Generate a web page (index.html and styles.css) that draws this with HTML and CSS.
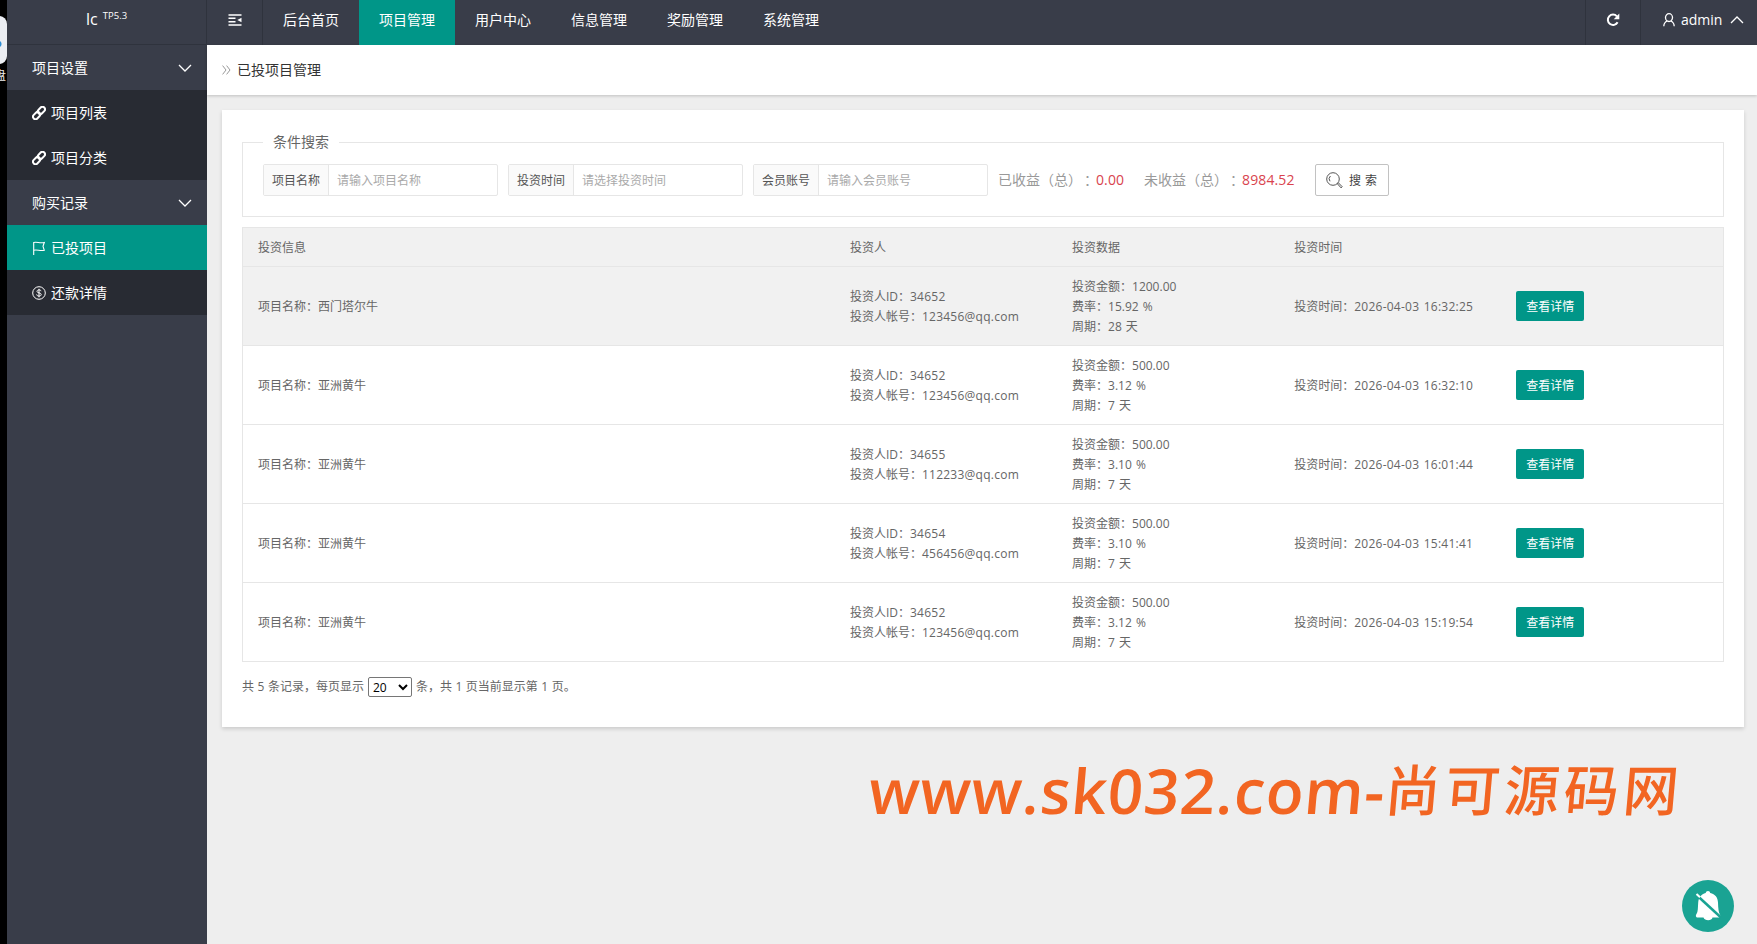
FILE: index.html
```html
<!DOCTYPE html>
<html lang="zh-CN">
<head>
  <meta charset="UTF-8">
  <title>已投项目管理</title>
  <link rel="stylesheet" href="styles.css">
</head>
<body>
  <svg class="sprite">
    <symbol id="link" viewBox="0 0 14 14">
      <g fill="none" stroke="currentColor" stroke-width="2">
        <rect x="5.4" y="1.9" width="8" height="5" rx="2.5" transform="rotate(-45 9.4 4.4)"/>
        <rect x="0.6" y="7.1" width="8" height="5" rx="2.5" transform="rotate(-45 4.6 9.6)"/>
      </g>
    </symbol>
    <symbol id="down" viewBox="0 0 14 8">
      <path d="M1 1l6 6 6-6" fill="none" stroke="currentColor" stroke-width="1.3"/>
    </symbol>
  </svg>

  <div class="page">
    <div class="desktop">
      <div class="desktop-icon"></div>
      <span class="desktop-text">盘</span>
    </div>

    <div class="side">
      <div class="logo">lc <sup>TP5.3</sup></div>
      <div class="side-title">项目设置 <svg class="arrow"><use href="#down"/></svg></div>
      <a class="side-item"><svg class="icon"><use href="#link"/></svg>项目列表</a>
      <a class="side-item"><svg class="icon"><use href="#link"/></svg>项目分类</a>
      <div class="side-title">购买记录 <svg class="arrow"><use href="#down"/></svg></div>
      <a class="side-item active"><svg class="icon" viewBox="0 0 14 14"><path d="M1.700 14V1.500c3.500-1 6 1.200 10.600 0L11 5.300l1.300 4c-4.500 1-7-1-10.600 0" fill="none" stroke="currentColor" stroke-width="1.100"/></svg>已投项目</a>
      <a class="side-item"><svg class="icon" viewBox="0 0 14 14"><g fill="none" stroke="currentColor"><circle cx="7" cy="7" r="6.300"/><path d="M9 5.200C8.800 4 7.900 3.900 7 3.900c-1.200 0-2 .6-2 1.500C5 7.500 9.200 6.300 9.200 8.500c0 1-.9 1.600-2.200 1.600s-2.200-.6-2.300-1.700M7 2.800v8.500"/></g></svg>还款详情</a>
    </div>

    <div class="main">
      <div class="header">
        <a class="tool"><svg width="14" height="12" viewBox="0 0 14 12"><path d="M.5 1h13M.5 11h13M.5 4.300h7M.5 7.700h7" stroke="currentColor" stroke-width="1.500"/><path d="M13.500 3.800v4.400L9.300 6z" fill="currentColor"/></svg></a>
        <a class="nav">后台首页</a>
        <a class="nav active">项目管理</a>
        <a class="nav">用户中心</a>
        <a class="nav">信息管理</a>
        <a class="nav">奖励管理</a>
        <a class="nav">系统管理</a>
        <a class="tool refresh"><svg width="14" height="14" viewBox="0 0 14 14"><path d="M11.600 9.300A5.200 5.200 0 1 1 10.900 3.300" fill="none" stroke="currentColor" stroke-width="2"/><path d="M13.300 .6v5.600H7.700z" fill="currentColor"/></svg></a>
        <a class="user">
          <svg width="12" height="14" viewBox="0 0 12 14"><g fill="none" stroke="currentColor" stroke-width="1.300"><ellipse cx="6" cy="4.600" rx="3.500" ry="3.900"/><path d="M4.300 8C2 8.800.9 10.500.8 13.300M7.700 8c2.300.8 3.400 2.500 3.500 5.300"/></g></svg>
          <span>admin</span>
          <svg class="arrow up"><use href="#down"/></svg>
        </a>
      </div>

      <div class="crumb"><svg width="9" height="10" viewBox="0 0 9 10"><path d="M.6.6L4 5 .6 9.400M4.600.6L8 5 4.600 9.400" fill="none" stroke="#999"/></svg>已投项目管理</div>

      <div class="card">
        <fieldset class="search">
          <legend>条件搜索</legend>
          <div class="form">
            <div class="field"><label>项目名称</label><input type="text" placeholder="请输入项目名称"></div>
            <div class="field"><label>投资时间</label><input type="text" placeholder="请选择投资时间"></div>
            <div class="field"><label>会员账号</label><input type="text" placeholder="请输入会员账号"></div>
            <div class="total">已收益（总）<i>：</i><b>0.00</b></div>
            <div class="total">未收益（总）<i>：</i><b>8984.52</b></div>
            <button class="btn-search"><svg width="17" height="17" viewBox="0 0 17 17"><g fill="none" stroke="#555"><circle cx="7" cy="7" r="6.300"/><path d="M4 9.300A4 4 0 0 1 4.400 4M11.400 11.800l1-1 3.800 3.900-1.100 1.200z"/></g></svg>搜 索</button>
          </div>
        </fieldset>

        <table class="list">
          <thead>
            <tr><th class="w40">投资信息</th><th class="w15">投资人</th><th class="w15">投资数据</th><th class="w15">投资时间</th><th></th></tr>
          </thead>
          <tbody>
            <tr class="hover">
              <td>项目名称：西门塔尔牛</td>
              <td>投资人ID：<span class="num">34652</span><br>投资人帐号：<span class="num">123456@qq.com</span></td>
              <td>投资金额：1200.00<br>费率：15.92 %<br>周期：28 天</td>
              <td>投资时间：<span class="num">2026-04-03 16:32:25</span></td>
              <td><a class="btn">查看详情</a></td>
            </tr>
            <tr>
              <td>项目名称：亚洲黄牛</td>
              <td>投资人ID：<span class="num">34652</span><br>投资人帐号：<span class="num">123456@qq.com</span></td>
              <td>投资金额：500.00<br>费率：3.12 %<br>周期：7 天</td>
              <td>投资时间：<span class="num">2026-04-03 16:32:10</span></td>
              <td><a class="btn">查看详情</a></td>
            </tr>
            <tr>
              <td>项目名称：亚洲黄牛</td>
              <td>投资人ID：<span class="num">34655</span><br>投资人帐号：<span class="num">112233@qq.com</span></td>
              <td>投资金额：500.00<br>费率：3.10 %<br>周期：7 天</td>
              <td>投资时间：<span class="num">2026-04-03 16:01:44</span></td>
              <td><a class="btn">查看详情</a></td>
            </tr>
            <tr>
              <td>项目名称：亚洲黄牛</td>
              <td>投资人ID：<span class="num">34654</span><br>投资人帐号：<span class="num">456456@qq.com</span></td>
              <td>投资金额：500.00<br>费率：3.10 %<br>周期：7 天</td>
              <td>投资时间：<span class="num">2026-04-03 15:41:41</span></td>
              <td><a class="btn">查看详情</a></td>
            </tr>
            <tr>
              <td>项目名称：亚洲黄牛</td>
              <td>投资人ID：<span class="num">34652</span><br>投资人帐号：<span class="num">123456@qq.com</span></td>
              <td>投资金额：500.00<br>费率：3.12 %<br>周期：7 天</td>
              <td>投资时间：<span class="num">2026-04-03 15:19:54</span></td>
              <td><a class="btn">查看详情</a></td>
            </tr>
          </tbody>
        </table>

        <div class="pager">
          <span>共 5 条记录，每页显示</span>
          <select><option>20</option></select>
          <span>条，共 1 页当前显示第 1 页。</span>
        </div>
      </div>
    </div>
  </div>

  <div class="watermark"><span class="site">www.sk032.com-</span><span class="name">尚可源码网</span></div>

  <a class="bell"><svg width="26" height="32" viewBox="0 0 26 32"><path d="M13 1c1.300 0 2 .8 2.200 2 5 1.200 7.600 4.500 7.800 9.500.2 6 .6 10 2 12 .6 1.500.3 3-1 3H17.500c-.5 3.600-8 3.600-9 0H3c-2.500 0-2.500-2-1.500-3.500 1.600-2.500 1.300-6 1.700-11.500.4-5 3-8.300 7.500-9.500.2-1.200 1-2 2.300-2z" fill="#fff"/><path d="M1 4.500L26 27.500" stroke="#1aa393" stroke-width="2.500"/><path d="M1.500 4L5 7.300" stroke="#fff" stroke-width="2"/></svg></a>
</body>
</html>
```
FILE: styles.css
```css
* {
  box-sizing: border-box;
}
body {
  margin: 0;
  height: 944px;
  overflow: hidden;
  background: #eee;
  color: #666;
  font: 12px/20px "Open Sans", "Noto Sans CJK SC", sans-serif;
}
.sprite {
  display: none;
}
.page {
  display: flex;
  height: 944px;
}

/* 左侧桌面边缘 */
.desktop {
  width: 7px;
  background: #000;
  overflow: hidden;
  padding-top: 16px;
}
.desktop-icon {
  width: 40px;
  height: 48px;
  margin-left: -33px;
  border-radius: 8px;
  background: radial-gradient(circle at 31px 28px, #2f8fd5 3px, #eceef3 4px);
}
.desktop-text {
  display: block;
  margin-left: -6px;
  margin-top: 2px;
  color: #eee;
}

.side {
  width: 200px;
  background: #393d49;
  color: #fff;
  font-size: 14px;
}
.logo {
  height: 45px;
  line-height: 39px;
  text-align: center;
  font-size: 16px;
  border-right: 1px solid #2f333d;
  border-bottom: 1px solid #2f333d;
}
.logo sup {
  font-size: 9.5px;
  line-height: 0;
  margin-left: 1px;
}
.side-title,
.side-item {
  display: flex;
  align-items: center;
  height: 45px;
  padding: 0 15px 0 25px;
}
.side-title {
  justify-content: space-between;
}
.side-item {
  background: #282b33;
}
.side-item.active,
.nav.active {
  background: #009688;
}
.icon {
  width: 14px;
  height: 14px;
  margin-right: 5px;
}
.arrow {
  width: 14px;
  height: 8px;
}
.up {
  transform: rotate(180deg);
}

.main {
  flex: 1;
}
.header {
  display: flex;
  height: 45px;
  background: #393d49;
  color: #fff;
  font-size: 14px;
}
.header a {
  display: flex;
  align-items: center;
  height: 45px;
  padding-bottom: 5px;
}
.tool {
  width: 56px;
  justify-content: center;
  border-right: 1px solid #2f333d;
}
.nav {
  padding: 0 20px;
}
.refresh {
  margin-left: auto;
  border-left: 1px solid #2f333d;
}
.user {
  width: 116px;
  padding-left: 22px;
  gap: 6px;
}
.user .arrow {
  margin-left: 2px;
}

.crumb {
  display: flex;
  align-items: center;
  gap: 6px;
  height: 50px;
  padding-left: 15px;
  background: #fff;
  color: #333;
  font-size: 14px;
  box-shadow: 0 1px 3px rgba(0, 0, 0, .2);
}
.card {
  height: 617px;
  margin: 15px 13px 0 15px;
  padding: 22px 20px 0;
  background: #fff;
  box-shadow: 0 2px 4px rgba(0, 0, 0, .15);
}

.search {
  height: 85px;
  margin: 0 0 10px;
  padding: 0 20px;
  border: 1px solid #e6e6e6;
}
.search legend {
  height: 20px;
  padding: 0 10px;
  font-size: 14px;
}
.form {
  display: flex;
  align-items: center;
  margin-top: 12px;
}
.field {
  display: flex;
  width: 235px;
  height: 32px;
  margin-right: 10px;
  border: 1px solid #e6e6e6;
  border-radius: 2px;
}
.field label {
  width: 65px;
  padding-top: 1px;
  line-height: 30px;
  height: 30px;
  text-align: center;
  background: #fafafa;
  border-right: 1px solid #e6e6e6;
  color: #555;
}
.field input {
  flex: 1;
  min-width: 0;
  padding: 2px 8px 0;
  border: 0;
  background: none;
  font: inherit;
}
.field input::placeholder {
  color: #aaa;
}
.total {
  display: flex;
  margin-right: 20px;
  color: #999;
  font-size: 14px;
}
.total i {
  width: 14px;
  padding-left: 2px;
  font-style: normal;
}
.total b {
  color: #d9434e;
  font-weight: normal;
  letter-spacing: .1px;
}
.btn-search {
  display: flex;
  align-items: center;
  justify-content: center;
  gap: 6px;
  width: 74px;
  height: 32px;
  padding: 1px 0 0;
  background: #fff;
  border: 1px solid #c2c2c2;
  border-radius: 2px;
  color: #444;
  font: inherit;
  word-spacing: 1px;
}

.list {
  width: 100%;
  border-collapse: collapse;
  table-layout: fixed;
  border: 1px solid #e6e6e6;
}
.list th,
.list td {
  padding: 2px 15px 0;
  text-align: left;
  font-weight: normal;
}
.list tr {
  height: 79px;
  border-bottom: 1px solid #e6e6e6;
}
.list thead tr {
  height: 39px;
}
.list thead tr,
.list .hover {
  background: #f1f1f1;
}
.list td {
  white-space: nowrap;
  word-spacing: 1px;
}
.list td:last-child {
  padding-top: 0;
}
.w40 {
  width: 40%;
}
.w15 {
  width: 15%;
}
.num {
  letter-spacing: .25px;
}
.btn {
  display: block;
  width: 68px;
  height: 30px;
  padding-top: 1px;
  background: #009688;
  border-radius: 2px;
  color: #fff;
  line-height: 30px;
  text-align: center;
}

.pager {
  display: flex;
  align-items: center;
  gap: 4px;
  margin-top: 15px;
  word-spacing: .4px;
}
.pager select {
  width: 44px;
  height: 20px;
  padding: 0;
  border: 1px solid #767676;
  border-radius: 2px;
  background: #fff;
  font: inherit;
}

/* 水印和右下角的按钮浮在页面上 */
.watermark {
  position: absolute;
  left: 869px;
  top: 754px;
  display: flex;
  color: #f26522;
  font-size: 62px;
  font-weight: 600;
  line-height: 72px;
  white-space: nowrap;
  transform: skewX(-5deg);
}
.site {
  letter-spacing: .8px;
}
.name {
  font-size: 55px;
  font-weight: 500;
  letter-spacing: 4.5px;
}
.bell {
  position: absolute;
  right: 23px;
  bottom: 12px;
  display: flex;
  align-items: center;
  justify-content: center;
  width: 52px;
  height: 52px;
  border-radius: 50%;
  background: #1aa393;
}
```
